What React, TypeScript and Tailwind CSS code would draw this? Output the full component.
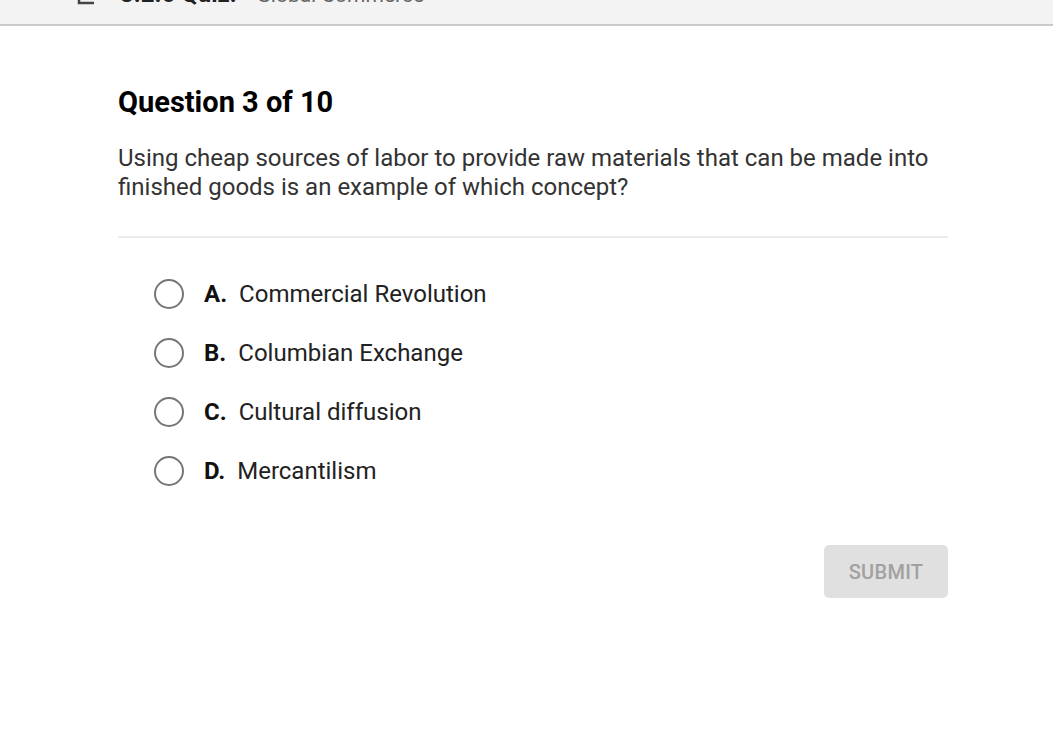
import React from "react";

const options = [
  { letter: "A.", text: "Commercial Revolution" },
  { letter: "B.", text: "Columbian Exchange" },
  { letter: "C.", text: "Cultural diffusion" },
  { letter: "D.", text: "Mercantilism" },
];

export default function App() {
  return (
    <div className="w-[1053px] h-[740px] bg-white overflow-hidden" style={{ fontFamily: "Roboto, 'Liberation Sans', sans-serif" }}>
      <div className="h-[26px] bg-[#f3f3f3] border-b-2 border-[#c9c9c9] overflow-hidden relative">
        <div className="flex items-end h-[20px] -mt-[14px] pl-[77px]">
          <svg width="18" height="20" viewBox="0 0 18 20" className="mb-[-2px]">
            <path d="M2 0 V15 H17" stroke="#444" strokeWidth="2.5" fill="none" />
          </svg>
          <span className="ml-[25px] text-[24px] font-bold text-[#222] leading-none">3.2.6 Quiz:</span>
          <span className="ml-[20px] text-[21px] text-[#666] leading-none">Global Commerce</span>
        </div>
      </div>
      <div className="pl-[118px] pr-[105px] pt-[60px]">
        <h1 className="text-[29px] font-bold text-black leading-[32px]">Question 3 of 10</h1>
        <p className="mt-[26px] text-[24px] leading-[29px] text-[#333] w-[830px]">
          Using cheap sources of labor to provide raw materials that can be made into finished goods is an example of which concept?
        </p>
        <div className="mt-[34px] h-[2px] bg-[#ebebeb] w-[830px]" />
        <div className="mt-[26px] pl-[36px] flex flex-col">
          {options.map((o) => (
            <div key={o.letter} className="flex items-center h-[59px]">
              <div className="w-[30px] h-[30px] rounded-full border-[2.5px] border-[#767676] shrink-0" />
              <span className="ml-[20px] text-[24px] font-bold text-[#111]">{o.letter}</span>
              <span className="ml-[12px] text-[24px] text-[#222]">{o.text}</span>
            </div>
          ))}
        </div>
        <div className="w-[830px] flex justify-end mt-[45px]">
          <button className="w-[124px] h-[53px] rounded-[5px] bg-[#e0e0e0] text-[#a1a1a1] text-[20px] font-medium tracking-[0.3px]">
            SUBMIT
          </button>
        </div>
      </div>
    </div>
  );
}
